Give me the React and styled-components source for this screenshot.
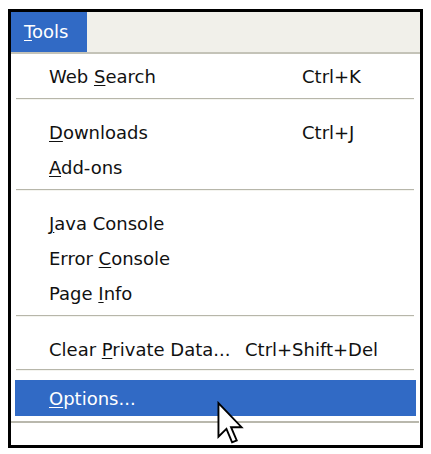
import React from "react";
import styled, { createGlobalStyle } from "styled-components";

const GlobalStyle = createGlobalStyle`
  html, body { margin: 0; padding: 0; background: #ffffff; }
  body { font-family: "DejaVu Sans", Verdana, sans-serif; }
`;

const Frame = styled.div`
  position: relative;
  box-sizing: border-box;
  width: 415px;
  height: 439px;
  margin: 9px 0 0 8px;
  border: 3px solid #000;
  background: #fff;
  display: flex;
  flex-direction: column;
`;

const MenuBar = styled.div`
  display: flex;
  height: 40px;
  background: #f1f0ea;
  border-bottom: 2px solid #c4c3b8;
`;

const MenuTitle = styled.div`
  width: 76px;
  box-sizing: border-box;
  padding-left: 13px;
  background: ${(p) => (p.$active ? "#316ac5" : "transparent")};
  color: ${(p) => (p.$active ? "#fff" : "#000")};
  font-size: 18px;
  line-height: 40px;
`;

const Popup = styled.div`
  display: flex;
  flex-direction: column;
  padding: 5px 0 5px 0;
  margin-right: 1px;
  border-bottom: 2px solid #b9b8ad;
`;

const Item = styled.div`
  display: flex;
  align-items: center;
  height: ${(p) => (p.$active ? 36 : 35)}px;
  margin: 0 3px 0 4px;
  padding-left: 34px;
  font-size: 18px;
  color: ${(p) => (p.$active ? "#fff" : "#111")};
  background: ${(p) => (p.$active ? "#316ac5" : "transparent")};
  white-space: nowrap;
`;

const Label = styled.span`
  display: inline-block;
  min-width: ${(p) => p.$col || 0}px;
`;

const Accel = styled.span``;

const Key = styled.u`
  text-decoration-thickness: 1px;
  text-underline-offset: 2px;
`;

const Separator = styled.div`
  height: 2px;
  margin: ${(p) => (p.$tight ? "2px 5px 9px 5px" : "4px 5px 15px 5px")};
  background: #b7b6aa;
  border-bottom: 1px solid #f4f4ef;
  box-sizing: border-box;
`;

const Cursor = styled.svg`
  position: absolute;
  left: 206px;
  top: 390px;
  width: 26px;
  height: 42px;
  overflow: visible;
`;

function Entry({ pre, k, post, accel, col = 253, active }) {
  return (
    <Item $active={active}>
      <Label $col={accel ? col : 0}>
        {pre}
        <Key>{k}</Key>
        {post}
      </Label>
      {accel && <Accel>{accel}</Accel>}
    </Item>
  );
}

export default function App() {
  return (
    <>
      <GlobalStyle />
      <Frame>
        <MenuBar>
          <MenuTitle $active>
            <Key>T</Key>ools
          </MenuTitle>
        </MenuBar>
        <Popup>
          <Entry pre="Web " k="S" post="earch" accel="Ctrl+K" />
          <Separator />
          <Entry pre="" k="D" post="ownloads" accel="Ctrl+J" />
          <Entry pre="" k="A" post="dd-ons" />
          <Separator />
          <Entry pre="" k="J" post="ava Console" />
          <Entry pre="Error " k="C" post="onsole" />
          <Entry pre="Page " k="I" post="nfo" />
          <Separator />
          <Entry pre="Clear " k="P" post="rivate Data..." accel="Ctrl+Shift+Del" col={196} />
          <Separator $tight />
          <Entry pre="" k="O" post="ptions..." active />
        </Popup>
        <Cursor viewBox="0 0 12 20">
          <path
            d="M0.5 0.5 L0.5 16.5 L4.3 12.8 L7 19.2 L9.2 18.3 L6.5 12 L11.5 12 Z"
            fill="#fff"
            stroke="#000"
            strokeWidth="0.9"
            strokeLinejoin="miter"
          />
        </Cursor>
      </Frame>
    </>
  );
}
